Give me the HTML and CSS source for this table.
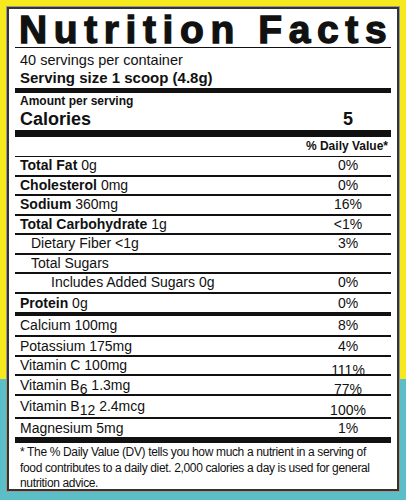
FILE: index.html
```html
<!DOCTYPE html>
<html lang="en">
<head>
  <meta charset="UTF-8">
  <title>Nutrition Facts</title>
  <link rel="stylesheet" href="styles.css">
</head>
<body>
  <div class="label">
    <h1 class="title">Nutrition Facts</h1>
    <div class="servings">
      <div>40 servings per container</div>
      <div class="size">Serving size 1 scoop (4.8g)</div>
    </div>
    <div class="bar"></div>
    <div class="amount">Amount per serving</div>
    <div class="calories">
      <span>Calories</span>
      <span class="val">5</span>
    </div>
    <div class="bar bar-big"></div>
    <div class="dv-head">% Daily Value*</div>

    <div class="row"><span><b>Total Fat</b> 0g</span><span class="val">0%</span></div>
    <div class="row"><span><b>Cholesterol</b> 0mg</span><span class="val">0%</span></div>
    <div class="row"><span><b>Sodium</b> 360mg</span><span class="val">16%</span></div>
    <div class="row"><span><b>Total Carbohydrate</b> 1g</span><span class="val">&lt;1%</span></div>
    <div class="row indent"><span>Dietary Fiber &lt;1g</span><span class="val">3%</span></div>
    <div class="row indent"><span>Total Sugars</span><span class="val"></span></div>
    <div class="row indent2"><span>Includes Added Sugars 0g</span><span class="val">0%</span></div>
    <div class="row thick"><span><b>Protein</b> 0g</span><span class="val">0%</span></div>

    <div class="row mineral"><span>Calcium 100mg</span><span class="val">8%</span></div>
    <div class="row mineral"><span>Potassium 175mg</span><span class="val">4%</span></div>
    <div class="row vit-c"><span>Vitamin C 100mg</span><span class="val low">111%</span></div>
    <div class="row vit-b6"><span>Vitamin B<sub>6</sub> 1.3mg</span><span class="val low">77%</span></div>
    <div class="row vit-b12"><span>Vitamin B<sub>12</sub> 2.4mcg</span><span class="val low">100%</span></div>
    <div class="row last"><span>Magnesium 5mg</span><span class="val">1%</span></div>

    <p class="note">* The % Daily Value (DV) tells you how much a nutrient in a serving of food contributes to a daily diet. 2,000 calories a day is used for general nutrition advice.</p>
  </div>
</body>
</html>
```

FILE: styles.css
```css
body {
  margin: 0;
  width: 406px;
  height: 500px;
  background: linear-gradient(#f6ea1e 0, #f6ea1e 379px, #5cbfc8 379px);
  font-family: "Liberation Sans", Arial, sans-serif;
  color: #111;
  padding: 7px;
  box-sizing: border-box;
}
.label {
  background: #fff;
  border: 2px solid #333;
  box-shadow: 0 0 0 1px #9a9a8a;
  padding: 0 6px;
  height: 484px;
  box-sizing: border-box;
}
.title {
  margin: 0;
  padding: 4px 0 0 4px;
  font-size: 39px;
  line-height: 34px;
  font-weight: bold;
  letter-spacing: 6.6px;
  -webkit-text-stroke: 1.3px #111;
  border-bottom: 1.5px solid #111;
  white-space: nowrap;
}
.servings {
  padding: 3px 5px 1px;
  font-size: 14.5px;
  line-height: 18px;
}
.size {
  font-weight: bold;
  font-size: 15px;
}
.bar {
  height: 5px;
  background: #111;
}
.bar-big {
  height: 7px;
}
.amount {
  padding: 2px 5px 0;
  font-size: 12px;
  font-weight: bold;
  line-height: 13px;
}
.calories {
  display: flex;
  justify-content: space-between;
  padding: 0 0 0 5px;
  font-size: 18px;
  font-weight: bold;
  line-height: 22px;
}
.val {
  width: 80px;
  text-align: center;
  margin-right: 3px;
}
.dv-head {
  text-align: right;
  font-size: 12px;
  font-weight: bold;
  line-height: 19px;
  padding-right: 3px;
  border-bottom: 1.5px solid #111;
}
.row {
  display: flex;
  justify-content: space-between;
  padding-left: 5px;
  font-size: 14px;
  line-height: 17.5px;
  border-bottom: 2px solid #111;
}
.indent {
  padding-left: 16px;
}
.indent2 {
  padding-left: 36px;
}
.thick {
  border-bottom-width: 4px;
  line-height: 18.5px;
}
.mineral {
  line-height: 18.5px;
}
.vit-c {
  line-height: 16.5px;
}
.vit-b6 {
  line-height: 18.5px;
}
.vit-b12 {
  line-height: 20.5px;
}
.val.low {
  position: relative;
  top: 5px;
  height: 13px;
}
.vit-b6 .val.low {
  top: 4px;
}
.vit-b12 .val.low {
  top: 4px;
}
sub {
  font-size: 14px;
  line-height: 0;
  vertical-align: -4px;
}
.last {
  border-bottom-width: 6px;
  line-height: 18.5px;
}
.note {
  margin: 0;
  padding: 2px 5px 0;
  font-size: 12px;
  letter-spacing: -0.35px;
  line-height: 15.5px;
}
```
